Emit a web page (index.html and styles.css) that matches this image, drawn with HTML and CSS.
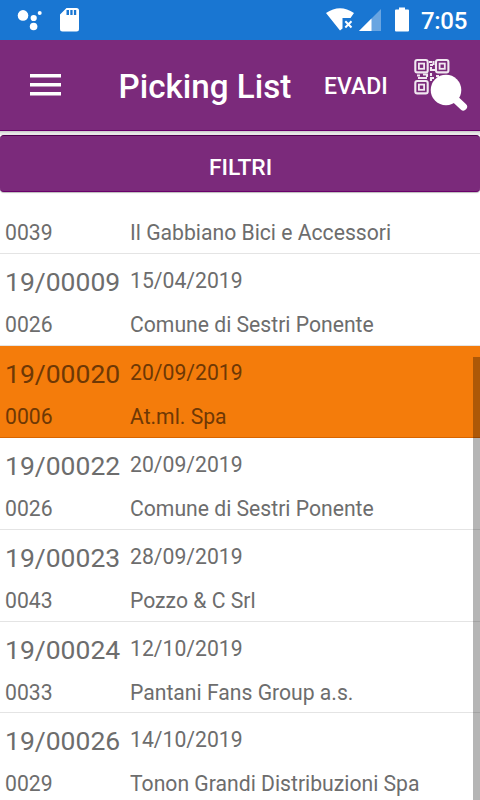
FILE: index.html
```html
<!DOCTYPE html>
<html lang="it">
<head>
<meta charset="utf-8">
<title>Picking List</title>
<link rel="stylesheet" href="styles.css">
</head>
<body>
<div class="screen">
  <div class="status">
    <svg class="status-left" width="100" height="40" viewBox="0 0 100 40" fill="#fff">
      <circle cx="23" cy="15.400" r="5.300"/><circle cx="33.700" cy="18" r="3.100"/><circle cx="39.700" cy="13.100" r="2"/><circle cx="33.600" cy="26.500" r="3.800"/>
      <path fill-rule="evenodd" d="M66.500 8H76.500Q79 8 79 10.500V29Q79 31.500 76.500 31.500H62.500Q60 31.500 60 29V14.500ZM66.500 10V15H69V10ZM70.300 10V15H72.600V10ZM73.900 10V15H76.200V10Z"/>
    </svg>
    <svg class="status-right" width="110" height="40" viewBox="310 0 110 40" fill="#fff">
      <path d="M326 13Q340 3.500 354 13L350.500 18H342.500V28.500L340 30.500Z"/>
      <path d="M345.300 21.300L351.500 27.500M351.500 21.300L345.300 27.500" stroke="#fff" stroke-width="2"/>
      <path d="M381 9V31H359Z" opacity=".35"/><path d="M371.500 18.500V31H359Z"/>
      <path d="M399 7.500H405V9.500H408Q409 9.500 409 10.500V30.500Q409 31.500 408 31.500H396Q395 31.500 395 30.500V10.500Q395 9.500 396 9.500H399Z"/>
    </svg>
    <span class="clock">7:05</span>
  </div>
  <header class="bar">
    <svg class="menu" width="32" height="24" viewBox="0 0 32 24" fill="#fff"><path d="M0 1H31V4.600H0ZM0 10H31V13.600H0ZM0 19H31V22.600H0Z"/></svg>
    <h1>Picking List</h1>
    <span class="evadi">EVADI</span>
    <svg class="search" width="56" height="56" viewBox="412 57 56 56" fill="none" stroke="#f1e8f1">
      <g stroke-width="2.100">
        <rect x="415.300" y="60" width="12.400" height="12.400" rx="2"/><rect x="436" y="60" width="12.400" height="12.400" rx="2"/><rect x="415.300" y="81" width="12.400" height="12.400" rx="2"/>
        <rect x="418.900" y="63.600" width="5.200" height="5.200" stroke-width="1.800"/><rect x="439.600" y="63.600" width="5.200" height="5.200" stroke-width="1.800"/><rect x="418.900" y="84.600" width="5.200" height="5.200" stroke-width="1.800"/>
        <path d="M429 62H432M433.500 61V65M430 65H433M431 67V70H435M417 75.500H420M418 78H427M423 74.500H427V77M431 73V76M434 78H431V81M436 76H439"/>
      </g>
      <circle cx="446" cy="90" r="15.300" fill="#fff" stroke="none"/><path d="M455 99L463.300 106.800" stroke="#fff" stroke-width="7.500" stroke-linecap="round"/>
    </svg>
  </header>
  <div class="gap"></div>
  <button class="filter">FILTRI</button>
  <main class="list">
    <div class="row first"><span class="code">0039</span><span class="name">Il Gabbiano Bici e Accessori</span></div>
    <div class="row"><span class="num">19/00009</span><span class="date">15/04/2019</span><span class="code">0026</span><span class="name">Comune di Sestri Ponente</span></div>
    <div class="row selected"><span class="num">19/00020</span><span class="date">20/09/2019</span><span class="code">0006</span><span class="name">At.ml. Spa</span></div>
    <div class="row"><span class="num">19/00022</span><span class="date">20/09/2019</span><span class="code">0026</span><span class="name">Comune di Sestri Ponente</span></div>
    <div class="row"><span class="num">19/00023</span><span class="date">28/09/2019</span><span class="code">0043</span><span class="name">Pozzo &amp; C Srl</span></div>
    <div class="row"><span class="num">19/00024</span><span class="date">12/10/2019</span><span class="code">0033</span><span class="name">Pantani Fans Group a.s.</span></div>
    <div class="row"><span class="num">19/00026</span><span class="date">14/10/2019</span><span class="code">0029</span><span class="name">Tonon Grandi Distribuzioni Spa</span></div>
  </main>
  <div class="scrollbar"></div>
</div>
</body>
</html>
```
FILE: styles.css
```css
* { box-sizing: border-box; }
body { margin: 0; font-family: Roboto, "Liberation Sans", sans-serif; background: #fff; }
.screen { position: relative; width: 480px; height: 800px; overflow: hidden; display: flex; flex-direction: column; }
.status { height: 40px; flex: none; display: flex; align-items: center; background: #1976d2; color: #fff; }
.status-right { margin-left: auto; }
.clock { width: 60px; padding: 1px 0 0 1px; font-size: 24px; line-height: 40px; font-weight: 500; letter-spacing: -.3px; }
.bar { height: 91px; flex: none; display: flex; align-items: center; background: #7b2a7b; border-bottom: 1px solid #6a006a; color: #fff; }
.menu { flex: none; margin-left: 30px; }
h1 { margin: 4px 0 0 56.5px; width: 205.5px; font-size: 33.2px; line-height: 44px; font-weight: 500; white-space: nowrap; }
.evadi { width: 88px; margin-top: 3px; font-size: 23px; line-height: 30px; font-weight: 500; }
.search { flex: none; }
.gap { height: 4px; flex: none; background: linear-gradient(#c8c8c8, #e8e8e8 60%); }
.filter { height: 57px; flex: none; padding: 9px 0 0 1px; border: 0; border-top: 1px solid #500050; border-bottom: 1px solid #6a006a; border-radius: 4px; background: #7b2a7b; box-shadow: 0 1px 1px #bbb; color: #fff; font: 500 22.8px/30px Roboto, sans-serif; }
.list { flex: none; padding-top: 18px; }
.row { height: 91.9px; display: grid; grid-template: 53px 38px / 125px 1fr; padding-left: 5px; border-bottom: 1px solid #e4e4e4; font-size: 21.17px; color: #6d6d6d; white-space: nowrap; }
.row.first { height: 44px; grid-template-rows: 43px; }
.row.selected { background: #f47c0b; border-bottom-color: #d86500; color: #6e3805; }
.num { font-size: 26.5px; line-height: 56px; }
.date { line-height: 54px; }
.code, .name { line-height: 36px; }
.first .code, .first .name { line-height: 46px; }
.scrollbar { position: absolute; top: 357px; right: 0; width: 7px; height: 443px; background: rgba(0, 0, 0, .29); }
```
